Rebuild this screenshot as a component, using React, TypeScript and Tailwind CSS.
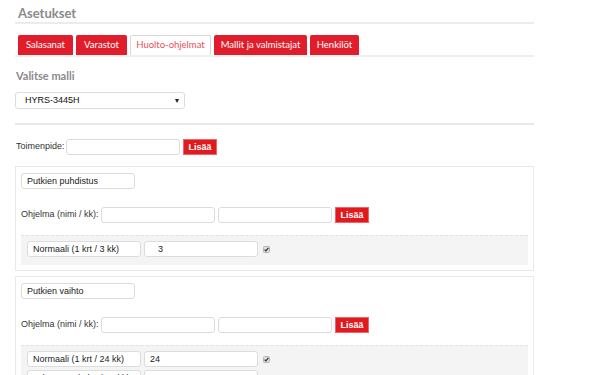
import React from 'react';

const tabs = [
  { label: 'Salasanat', w: 'w-[55px]' },
  { label: 'Varastot', w: 'w-[51px]' },
  { label: 'Huolto-ohjelmat', w: 'w-[81px]', active: true },
  { label: 'Mallit ja valmistajat', w: 'w-[93px]' },
  { label: 'Henkilöt', w: 'w-[49px]' },
];

const inputCls =
  'block h-[16px] w-[114px] rounded-[3px] border border-[#dcdcdc] bg-white px-[5px] text-[9px] text-[#222] outline-none';

const LisaaButton = () => (
  <button className="block h-[16px] w-[34px] border border-[#f0646a] bg-[#e01a1e] text-[9px] font-bold leading-none text-white">
    Lisää
  </button>
);

const Check = () => (
  <svg width="7" height="7" viewBox="0 0 7 7" className="ml-[2px] block">
    <rect x="0.5" y="0.5" width="6" height="6" rx="1" fill="#dedede" stroke="#b5b5b5" />
    <path d="M1.6 3.6 L2.9 4.9 L5.4 1.9" fill="none" stroke="#333" strokeWidth="1.3" />
  </svg>
);

interface Row {
  name: string;
  value: string;
  valueCls?: string;
}

const ProgramRow: React.FC<Row> = ({ name, value, valueCls }) => (
  <div className="flex items-center gap-[3px]">
    <input className={inputCls} defaultValue={name} />
    <input className={`${inputCls} ${valueCls ?? ''}`} defaultValue={value} />
    <Check />
  </div>
);

const Card: React.FC<{ title: string; rows: Row[] }> = ({ title, rows }) => (
  <div className="border border-[#e9e9e9] px-[5px] pt-[6px] pb-[5px] text-[9px]">
    <input className={inputCls} defaultValue={title} />
    <div className="mt-[18px] flex items-center gap-[3px]">
      <span className="w-[77px] shrink-0 whitespace-nowrap text-[9px] text-[#333]">Ohjelma (nimi / kk):</span>
      <input className={inputCls} />
      <input className={inputCls} />
      <LisaaButton />
    </div>
    <div className="mt-[12px] flex flex-col gap-[3px] border-t border-dashed border-[#e2e2e2] bg-[#f4f4f4] px-[6px] pt-[5px] pb-[8px]">
      {rows.map((r) => (
        <ProgramRow key={r.name} {...r} />
      ))}
    </div>
  </div>
);

export default function App() {
  return (
    <div className="h-[375px] w-[600px] overflow-hidden bg-white font-[Arial,'Liberation_Sans',sans-serif]">
      <div className="ml-[15px] w-[519px]">
        <div className="border-b-2 border-[#ececec] pt-[5px] pb-[1px] pl-[3px] font-['Lato',sans-serif] text-[13px] font-bold leading-[16px] text-[#8a8a8a]">
          Asetukset
        </div>

        <div className="mt-[11px] flex gap-[3px] border-b-2 border-[#efefef] pl-[3px] font-['Lato',sans-serif]">
          {tabs.map((t) =>
            t.active ? (
              <div
                key={t.label}
                className={`${t.w} flex h-[20px] items-center justify-center rounded-t-[2px] border border-b-0 border-[#d9d9d9] bg-white text-[9.5px] text-[#e8505a]`}
              >
                {t.label}
              </div>
            ) : (
              <div
                key={t.label}
                className={`${t.w} flex h-[20px] items-center justify-center rounded-t-[2px] bg-[#e11d2b] text-[9.5px] text-white`}
              >
                {t.label}
              </div>
            )
          )}
        </div>

        <div className="mt-[12px] pl-[1px] font-['Lato',sans-serif] text-[11px] font-bold leading-[14px] text-[#8a8a8a]">
          Valitse malli
        </div>

        <div className="relative mt-[9px] h-[17px] w-[170px]">
          <select className="block h-[17px] w-[170px] appearance-none rounded-[3px] border border-[#dcdcdc] bg-white pl-[9px] text-[9px] text-[#111] outline-none">
            <option>HYRS-3445H</option>
          </select>
          <span className="pointer-events-none absolute right-[6px] top-[7px] h-0 w-0 border-x-[2.5px] border-t-[4px] border-x-transparent border-t-[#222]" />
        </div>

        <div className="mt-[14px] h-[2px] bg-[#e8e8e8]" />

        <div className="mt-[14px] flex items-center">
          <span className="w-[51px] shrink-0 whitespace-nowrap pl-[1px] text-[9px] text-[#333]">Toimenpide:</span>
          <input className={inputCls} />
          <div className="ml-[3px]">
            <LisaaButton />
          </div>
        </div>

        <div className="mt-[11px] flex flex-col gap-[5px]">
          <Card
            title="Putkien puhdistus"
            rows={[{ name: 'Normaali (1 krt / 3 kk)', value: '3', valueCls: 'pl-[13px]' }]}
          />
          <Card
            title="Putkien vaihto"
            rows={[
              { name: 'Normaali (1 krt / 24 kk)', value: '24' },
              { name: 'Tehostettu (1 krt / 12 kk)', value: '12' },
            ]}
          />
        </div>
      </div>
    </div>
  );
}
